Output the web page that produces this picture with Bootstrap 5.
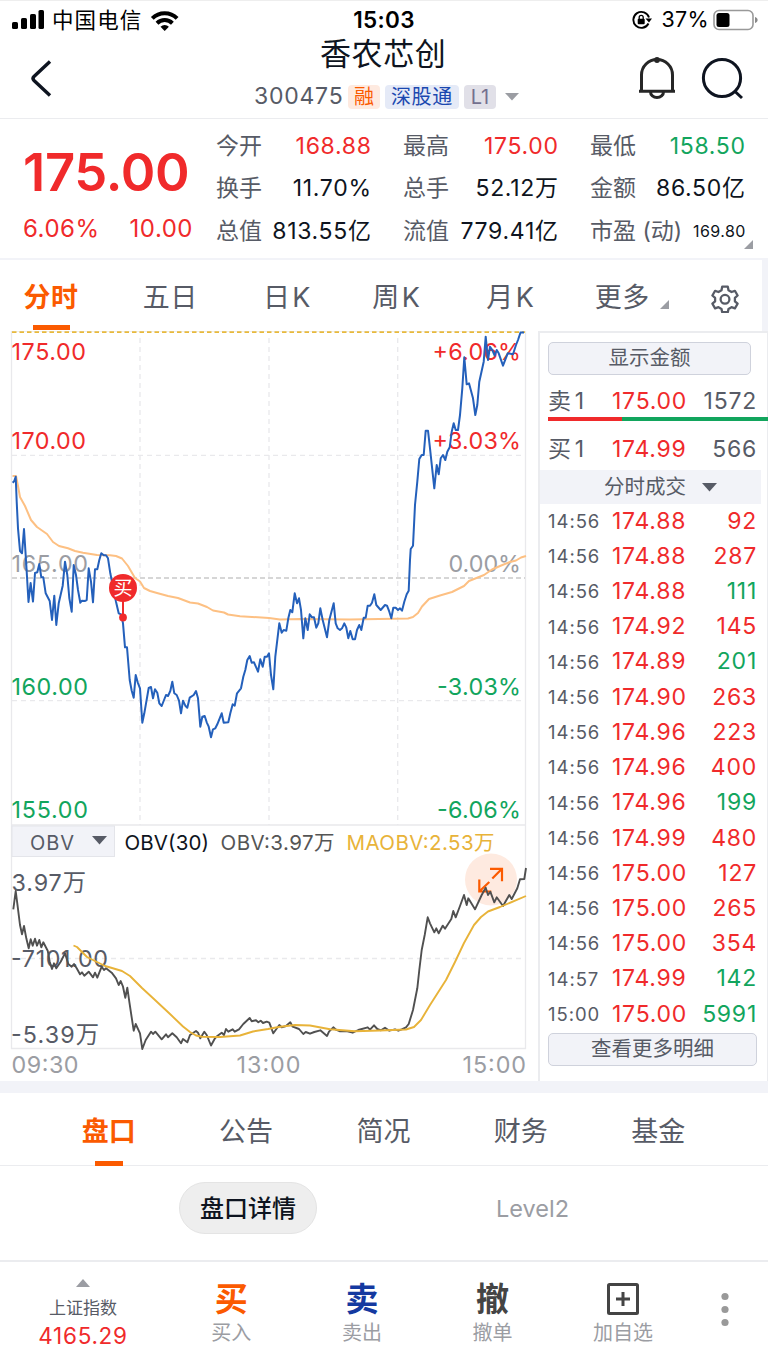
<!DOCTYPE html>
<html lang="zh-CN">
<head>
<meta charset="utf-8">
<meta name="viewport" content="width=device-width, initial-scale=1">
<title>香农芯创 300475</title>
<link href="https://cdn.jsdelivr.net/npm/bootstrap@5.3.0/dist/css/bootstrap.min.css" rel="stylesheet">
<style>
:root{--up:#f02a2b;--down:#12a55d;--ink:#0e1420;--sub:#575b66;--mute:#9b9da3;--brand:#fb5a00;--panel:#f2f3f8;--line:#ebecef}
body{width:768px;height:1366px;margin:0;overflow:hidden;background:#fff;color:var(--ink);font-family:Inter,"Noto Sans CJK SC",sans-serif;font-size:23px;line-height:1;white-space:nowrap}
svg{display:block;flex:none}
.up{color:var(--up)}.down{color:var(--down)}.sub{color:var(--sub)}.mute{color:var(--mute)}
.statusbar{height:40px;border-top:1px solid #eee;color:#000;font-size:21.5px}
.titlebar{height:79px;border-bottom:1px solid var(--line)}
.tag{height:24px;line-height:24px;font-size:20px;border-radius:4px;padding:0 6px}
.quote{height:141px;border-bottom:2px solid var(--panel)}
.metrics{width:155px;padding-top:6px;margin-right:32px}
.metric{height:42.5px}
.metric span+span{letter-spacing:.7px;margin-right:-.7px}
.bigprice{font-size:52.5px;font-weight:600;letter-spacing:-.3px}
.periods{height:71px;width:762px;font-size:27px;letter-spacing:.6px}
.periods .kline{letter-spacing:2.4px}
.periods,.sections{color:var(--sub)}
.on{color:var(--brand);font-weight:600;position:relative}
.on::after{content:"";position:absolute;left:50%;margin-left:-18.5px;width:37px;height:5px;background:var(--brand);top:calc(100% + 14px)}
.strip{width:6px;background:var(--panel)}
.board{height:750px}
.chart{width:538px}
.book{width:230px;border:solid var(--line);border-width:2px 1px 0 2px}
.greybtn{height:33px;border:1.5px solid #cfd2dc;border-radius:5px;background:var(--panel);color:var(--sub);font-size:20.5px}
.level,.tick{letter-spacing:.75px}
.c1{width:64px}.c2{width:74px}
.tick{height:35.22px}
.tick .c1{font-size:18.5px;letter-spacing:.95px}
.split{height:4px;margin-right:-1px}
.tickhead{height:34px;width:221px;background:var(--panel);color:var(--sub);font-size:20.5px}
.sections{height:73px;border-bottom:1px solid var(--line);font-size:27px}
.sections>div{width:137.4px}
.sections .on::after{width:28px;margin-left:-14px;top:calc(100% + 16px)}
.pillrow{height:96px;border-bottom:2px solid var(--line)}
.pill{width:138px;height:52px;padding-top:2px;border:1px solid #e4e4e4;border-radius:26px;background:#eee;font-size:24px;font-weight:500}
.dock{height:103px}
.dock>div{width:130.6px}
.dock .glyph{font-size:33px;font-weight:700;line-height:36px}
.dock .cap{font-size:20px;line-height:24px;color:var(--mute)}
svg text{font-family:Inter,"Noto Sans CJK SC",sans-serif;font-size:23.3px}
</style>
</head>
<body>
<header>
  <div class="statusbar d-flex align-items-center position-relative">
    <svg class="ms-1" width="40" height="38" viewBox="4 1 40 38"><g><rect x="12" y="21" width="6" height="7" rx="1.6"/><rect x="21" y="17" width="6" height="11" rx="1.6"/><rect x="30" y="13" width="6" height="15" rx="1.6"/><rect x="38.500" y="9" width="5.500" height="19" rx="1.6"/></g></svg>
    <span class="ms-2" style="letter-spacing:1.1px">中国电信</span>
    <svg class="ms-2" width="30" height="22" viewBox="0 0 30 22"><g fill="none" stroke="#000" stroke-width="4"><path d="M2.300 8.300a17.500 17.500 0 0 1 24.800 0"/><path d="M7 13.200a11 11 0 0 1 15.400 0"/></g><path d="M14.700 21l-4.200-4.300a6.200 6.200 0 0 1 8.400 0z"/></svg>
    <b class="position-absolute start-50 translate-middle-x fw-semibold" style="font-size:22.5px;letter-spacing:.3px">15:03</b>
    <div class="ms-auto d-flex align-items-center" style="margin-right:9px;margin-top:-1px">
      <svg width="20" height="20" viewBox="0 0 20 20"><path d="M16.500 13.500A8 8 0 1 1 17 7.500" fill="none" stroke="#000" stroke-width="1.900"/><path d="M13.500 8.500h6.500l-3 4z"/><rect x="5.700" y="8.700" width="7" height="5.600" rx="1"/><path d="M7.200 9V7.300a2 2 0 0 1 4 0V9" fill="none" stroke="#000" stroke-width="1.300"/></svg>
      <span style="margin:0 4px 0 10px;letter-spacing:.3px">37%</span>
      <svg width="46" height="22" viewBox="0 0 46 22"><rect x="1" y="1.500" width="39" height="19" rx="5" fill="#fff" stroke="#999" stroke-width="1.600"/><rect x="3.500" y="4" width="13" height="14" rx="2.500"/><path d="M42 8c3.500.8 3.500 5.200 0 6z" fill="#888"/></svg>
    </div>
  </div>
  <div class="titlebar d-flex">
    <svg width="60" height="76" viewBox="0 40 60 76"><path d="M50 61.500L34 76.500q-2 2 0 4L50 95.500" fill="none" stroke="#0e1420" stroke-width="3.400"/></svg>
    <div style="margin-left:194px">
      <div style="font-size:31px;height:43px;line-height:27px;letter-spacing:.6px;margin-left:66px">香农芯创</div>
      <div class="d-flex align-items-center" style="gap:5px;height:27px">
        <span class="sub" style="letter-spacing:.75px;width:89px">300475</span>
        <span class="tag" style="background:#feeae0;color:#fb5a00">融</span>
        <span class="tag" style="background:#e5eaf7;color:#1b48b0;width:74px;letter-spacing:.6px">深股通</span>
        <span class="tag text-center" style="background:#e1e0e8;color:#74708f;width:32px;padding:0">L1</span>
        <svg width="14" height="8" viewBox="0 0 14 8" style="margin-left:4px"><path d="M0 0h14L7 7.500z" fill="#9b9da3"/></svg>
      </div>
    </div>
    <svg class="ms-auto" width="130" height="76" viewBox="638 40 130 76"><g fill="none" stroke="#262626" stroke-width="3"><path d="M641.500 91V75a15.500 15.500 0 0 1 31 0v16M639 91.200h36M650.500 92a6.500 5.600 0 0 0 13 0"/></g><circle cx="657" cy="60" r="2.900" fill="#262626"/><g fill="none" stroke="#0e1420" stroke-width="3"><circle cx="722" cy="78" r="18.600"/><path d="M734.500 91l7.500 7"/></g></svg>
  </div>
</header>

<section class="quote d-flex position-relative">
  <div class="up" style="padding:27px 0 0 23px;width:216px">
    <div class="bigprice">175.00</div>
    <div class="d-flex justify-content-between" style="padding:18px 23px 0 0;font-size:24px;letter-spacing:.5px"><span>6.06%</span><span>10.00</span></div>
  </div>
  <div class="metrics">
    <div class="metric d-flex justify-content-between align-items-center"><span class="sub">今开</span><span class="up">168.88</span></div>
    <div class="metric d-flex justify-content-between align-items-center"><span class="sub">换手</span><span>11.70%</span></div>
    <div class="metric d-flex justify-content-between align-items-center"><span class="sub">总值</span><span>813.55亿</span></div>
  </div>
  <div class="metrics">
    <div class="metric d-flex justify-content-between align-items-center"><span class="sub">最高</span><span class="up">175.00</span></div>
    <div class="metric d-flex justify-content-between align-items-center"><span class="sub">总手</span><span>52.12万</span></div>
    <div class="metric d-flex justify-content-between align-items-center"><span class="sub">流值</span><span>779.41亿</span></div>
  </div>
  <div class="metrics me-0">
    <div class="metric d-flex justify-content-between align-items-center"><span class="sub">最低</span><span class="down">158.50</span></div>
    <div class="metric d-flex justify-content-between align-items-center"><span class="sub">金额</span><span>86.50亿</span></div>
    <div class="metric d-flex justify-content-between align-items-center"><span class="sub">市盈 (动)</span><span style="font-size:16px;letter-spacing:.4px">169.80</span></div>
  </div>
  <svg class="position-absolute" style="right:15px;bottom:9px" width="9" height="9"><path d="M9 0v9H0z" fill="#9b9da3"/></svg>
</section>

<div class="d-flex">
  <nav class="periods d-flex align-items-center" style="padding:3px 0 0 23.500px">
    <span class="on" style="margin-right:64px">分时</span><span style="margin-right:65px">五日</span><span class="kline" style="margin-right:59.500px">日K</span><span class="kline" style="margin-right:64px">周K</span><span class="kline" style="margin-right:58.500px">月K</span><span>更多</span>
    <svg width="9" height="9" style="margin:14px 42px 0 10px"><path d="M9 0v9H0z" fill="#9b9da3"/></svg>
    <svg width="28" height="28" viewBox="0 0 28 28" style="margin-top:3px"><g fill="none" stroke="#575b66" stroke-width="2.300" stroke-linejoin="round"><path d="M11.200 1.700h5.600l.7 3.600 3 1.700 3.400-1.200 2.700 4.700-2.700 2.400v3.400l2.700 2.400-2.700 4.700-3.400-1.200-3 1.700-.7 3.300h-5.600l-.7-3.300-3-1.700-3.400 1.200-2.700-4.700 2.700-2.400v-3.400l-2.700-2.400 2.700-4.700L7.500 7l3-1.700z"/><circle cx="14" cy="14.300" r="4.400"/></g></svg>
  </nav>
  <div class="strip"></div>
</div>

<main class="board d-flex">
  <div class="chart">
    <svg width="538" height="750" viewBox="0 331 538 750">
      <g fill="none" stroke="#e9e9ec" stroke-width="1.300">
        <path d="M11.500 331H525.500V1048.500H11.500zM11.500 825H525.500"/>
        <g stroke-dasharray="5 4"><path d="M140 338V825M269 338V825M397.700 338V825M12 455.300H525M12 700.700H525M12 958.500H525"/></g>
        <path d="M12 578H525" stroke="#c9c9c9" stroke-dasharray="5 3"/>
      </g>
      <path d="M12 332.200H525" stroke="#e8b93c" stroke-width="1.800" stroke-dasharray="4.500 3"/>
      <rect x="12" y="826" width="102.500" height="30.500" fill="#f2f3f8" stroke="#e4e5ea"/>
      <g fill="#f02a2b"><text x="11.500" y="359.500" textLength="74.500">175.00</text><text x="11.500" y="448.500" textLength="74.500">170.00</text><text x="432.500" y="359.500" textLength="88.500">+6.06%</text><text x="432.500" y="448.500" textLength="88.500">+3.03%</text></g>
      <g fill="#9b9da3"><text x="11.500" y="571.500" textLength="76.500">165.00</text><text x="448.500" y="571.500" textLength="72.500">0.00%</text><text x="11.500" y="1073" textLength="67">09:30</text><text x="236.500" y="1073" textLength="64">13:00</text><text x="462.500" y="1073" textLength="63.500">15:00</text></g>
      <g fill="#12a55d"><text x="11.500" y="694.500" textLength="76.500">160.00</text><text x="11.500" y="817.500" textLength="76.500">155.00</text><text x="437" y="694.500" textLength="84">-3.03%</text><text x="437" y="817.500" textLength="84">-6.06%</text></g>
      <g fill="#575b66"><text x="11.500" y="891" textLength="74.500">3.97万</text><text x="11" y="967" textLength="97">-7101.00</text><text x="11" y="1043" textLength="88">-5.39万</text></g>
      <text x="30" y="850" textLength="44" fill="#575b66" style="font-size:20px">OBV</text>
      <path d="M92 836h15l-7.500 8.500z" fill="#575b66"/>
      <g><text x="124.500" y="850" textLength="84.500" fill="#0e1420" style="font-size:20.500px">OBV(30)</text><text x="220.500" y="850" textLength="114" fill="#555" style="font-size:20.500px">OBV:3.97万</text><text x="346.500" y="850" textLength="148" fill="#e8b339" style="font-size:20.500px">MAOBV:2.53万</text></g>
      <g fill="none" stroke-linejoin="round">
        <polyline stroke="#fdc083" stroke-width="2" points="12.500,476 16,476 18,486 20,497 25,506 31,520 37,527 47,534 53,542 59,546 68,548.300 75,551 83,552.700 97,555 110,555.300 116,556 122,558.500 128,566 135,578 140,581.500 144,588 150,591 157,593 168,596 178,598 190,602.500 198,603.500 207,607 213,610.500 224,612.500 228,614.500 240,616.300 269,618 280,619.500 300,619 350,619.500 408,618.500 413,617 418,613 422,606.500 429,599 440,595.500 452,592 464,586 469,581 484,575 492,569.500 500,566 510,562 516,560.500 521,557.500 526,556"/>
        <polyline stroke="#2460bb" stroke-width="2" points="12.700,482.700 14.300,481 15.700,476.700 16.700,501.700 18,528.300 20,551 22,553.300 24,529 26.300,565 28.500,602 30.600,583 33,601.500 35,573 37.300,572.300 39.300,564 41.300,577.300 43.300,577.300 45.700,593.300 49.700,601 52,620 54.300,595.700 56.300,625 58.700,603.300 62.700,585.700 65,561.700 67.300,575 69.300,598 71.700,611.700 73.700,565 76,575 78,590 80.300,602.700 82,600.700 84.700,601 86.700,600 88.700,568.300 91,581.700 93,602.300 95,569.300 97.300,569.300 99.300,560 101.300,553.300 103.700,555.300 106,555.300 108,558.300 110.300,573.300 116,601.700 118.700,613.300 121,614.300 123,623.300 125,647.300 127,647.300 129.700,680 131.700,690.700 133.700,697.700 135.700,675 137.700,682.300 140,688.300 142.300,722.700 144.300,713.300 148.700,688 151,687 153,698.300 155,689.300 157.300,692.700 159.300,703.300 161.700,706 166,695 168,696 170.300,691 172.300,681.700 174.300,693.300 176.700,695 179,700.700 181,713.300 183,700.700 185.300,705.700 187.300,707.700 189.700,697.700 193.700,695 196,691 198,698.300 200.300,726.700 202.300,716.700 204.700,716 206.700,722.300 208.700,726.700 211,737.300 213,729.300 215.300,728.300 217.300,724.300 221.700,713.300 223.700,722.700 228.300,722.300 230.300,713.300 232.700,704.300 234.700,705.700 237,693.300 241,688.300 243.300,676.700 245.300,670 247.300,660 249.700,656 251.700,662.700 254,662.300 258,671.700 260.300,659.300 262.700,666.700 264.700,656.700 267,656.700 269,653.300 271,675 273.300,689.300 275.300,656.700 279.300,623.300 281.700,632.700 283.700,630 286.300,630.700 288.300,618.300 290.300,610 292.300,612.300 294.700,593.300 297,603.300 299,598.300 301,610 303.300,638.300 305.300,618.300 307.700,630 309.700,614.300 312,617.300 314,617.300 316.300,627.700 318.300,623.300 320.300,608.300 322.700,620 327,637.300 329.300,620 333.700,603.300 335.700,623.300 337.700,628.300 340,630 342,628.300 344.300,623.300 346.300,627.700 348.300,638.300 350.300,631 352.700,639.300 355,639.300 357,630 359.300,625 361.300,630 363.700,617.700 365.700,617.700 367.700,605.700 370,605.700 372,602.700 374.300,594.300 376.300,605 380.700,610 385,605 387,605.700 389.300,611.700 391.300,618.300 393.300,607.700 395.700,607.700 398,610 400,608.300 402,610.700 404.300,601.700 406.700,594.300 408.700,590.700 410,560 410.700,549 413,545.700 415,505 417.300,481.700 419.300,459 421.700,455 423.700,455 425.700,430.700 428,430.700 430,448.300 434.300,488.300 436.700,465 438.700,474.300 440.700,458.300 443,455 445.300,460 447.300,451.700 449.700,447.300 451.700,431.700 453.700,423.300 455.700,430 458,430 460,415 462.300,388.300 464.300,357.300 466.700,384.300 469,383.300 473,398.300 475.300,415 477.300,405 479.300,381.700 483.700,361.700 485.700,336.700 488,360 490,346.700 492.300,350 494.700,355.700 496.700,350 498.700,353.300 503,365.700 507.700,353.300 513,354.300 516,345 518,340 520.500,332.500 524,332.500"/>
      </g>
      <circle cx="491" cy="879.500" r="26" fill="#feeae0"/>
      <path d="M490 868.800h12v12.500M502 868.800l-9.700 9.700M479.300 879.500v12h12M479.300 891.500l10-9.500" fill="none" stroke="#fb5a00" stroke-width="2.200"/>
      <g fill="none" stroke-linejoin="round" stroke-width="1.900">
        <polyline stroke="#505050" points="13.300,909.300 15.700,891 17.700,906.700 20,925 22,934.300 24,926 26.300,938.300 28.700,948.300 30.700,939.300 32.700,945.700 35,938.700 37,945.700 39.300,940 41.300,947.300 43.300,942.300 47.700,950.700 49.700,961.700 52,969 54,963.300 56.300,968.300 60.700,961.700 65,953.300 68.300,964 71.700,966.700 74,964 76.700,968.300 80,974.300 82,972.300 84.300,975.700 88.700,971.700 93,977.300 95,972.700 97.300,977.700 101.700,966.700 104,970 106,968.300 111.700,972.700 116,978.300 118.700,985 120.700,981 123,986.700 125.300,997.700 127.300,987.700 129.300,1001.700 133.700,1030.700 135.700,1024 140,1033.300 142.300,1049 145.700,1040 151,1031.700 153,1034 155.300,1031.700 161.700,1039.300 166,1034.300 168,1037.300 172.300,1033.300 176.700,1037.300 181,1043.300 183,1039 187.300,1042.300 190,1035 196,1031 198,1032.700 200.300,1038.300 204.300,1031.700 206.700,1035 211,1045.500 215,1038.300 217.300,1036 221.700,1032.700 224,1035 226,1029 228.300,1031.700 232.700,1029.300 234.700,1031.700 239,1029.300 243.300,1024 249.700,1018 251.700,1021.300 256,1020.300 258.300,1022.300 260.700,1020.700 263,1023 266.700,1021.700 269.300,1022.700 273.300,1033.300 279.300,1025 281.700,1027.300 286,1026 290.300,1022.300 292.700,1026.700 299,1029 303.300,1034 305.700,1032 310,1033.700 314.300,1032 320.300,1030.300 327,1036 329,1031.700 333.300,1027.300 336,1029.700 340,1031.300 346.300,1031 352.700,1032.700 358.300,1030 367.700,1027.300 370,1029.700 374,1025.300 377.300,1029 381,1030.300 385,1027.700 389.300,1030.700 395,1029.300 398.300,1030.700 401.700,1029.300 406,1027.300 408.700,1024 413,1010 417.300,988.300 419.300,970 421.700,950 424.700,935 427.700,917.300 430,923.300 434.300,932.300 436.300,928.300 438.700,933.300 442.700,925.700 445,928.700 451.300,919 453.300,911 455.700,917.300 460,906 464,895 466.700,905 468.300,898.300 475,909.300 481.700,895 485.700,887.700 488,895 490.300,891.700 494.300,902.300 496.700,897.300 503,906 509.300,895 511.700,899 517.300,888.300 520,879.300 524.300,879 526,868"/>
        <polyline stroke="#e8b339" points="73.500,945.500 77,947 87,957 105,966 112,968 122,971 130,976 142,988 155,1000 170,1014 183,1026.500 190,1032 196,1035.500 202,1036.700 220,1037 240,1035.500 253,1031.500 268,1029 280,1026.700 295,1025 310,1025.500 330,1029.300 355,1031.300 380,1030.500 406,1029.500 414,1027 421,1020 430,1005 446,980 455,962 464,943 474,925 481,917 488,911.500 500,907 526,896"/>
      </g>
      <path d="M123 600v17" stroke="#f02a2b" stroke-width="2"/><circle cx="123" cy="617.500" r="3.900" fill="#f02a2b"/><circle cx="123" cy="588" r="14" fill="#f02a2b"/><text x="123" y="595" text-anchor="middle" fill="#fff" style="font-size:19px">买</text>
    </svg>
  </div>
  <aside class="book">
    <div style="padding:9px 0 0 8px">
      <div class="greybtn d-flex align-items-center justify-content-center" style="width:203px">显示金额</div>
      <div class="level d-flex align-items-center sub" style="height:42px;padding:11px 10px 0 0"><span class="c1">卖<span style="margin-left:3px">1</span></span><span class="c2 up">175.00</span><span class="ms-auto">1572</span></div>
      <div class="split d-flex"><div style="width:33.5%;background:#f02a2b"></div><div class="flex-grow-1" style="background:#12a55d"></div></div>
      <div class="level d-flex align-items-center sub" style="height:49px;padding:7px 10px 0 0"><span class="c1">买<span style="margin-left:3px">1</span></span><span class="c2 up">174.99</span><span class="ms-auto">566</span></div>
    </div>
    <div class="tickhead d-flex align-items-center" style="padding-left:64px">分时成交<svg class="ms-3" width="15" height="9"><path d="M0 0h15L7.500 8.500z" fill="#575b66"/></svg></div>
    <div id="ticks" style="padding:0 10px 0 8px;margin-top:-.500px"></div>
    <div class="greybtn d-flex align-items-center justify-content-center" style="margin:1px 10px 0 8px">查看更多明细</div>
  </aside>
</main>
<div style="height:12px;background:#f2f3f8"></div>

<nav class="sections d-flex text-center" style="padding:4px 0 0 40px">
  <div class="d-flex justify-content-center align-items-center"><span class="on">盘口</span></div>
  <div class="d-flex justify-content-center align-items-center">公告</div>
  <div class="d-flex justify-content-center align-items-center">简况</div>
  <div class="d-flex justify-content-center align-items-center">财务</div>
  <div class="d-flex justify-content-center align-items-center">基金</div>
</nav>
<div class="pillrow d-flex align-items-start" style="padding:16px 0 0 179px">
  <div class="pill d-flex align-items-center justify-content-center">盘口详情</div>
  <div class="mute d-flex align-items-center" style="height:53px;margin-left:179px;font-size:23.500px">Level2</div>
</div>
<footer class="dock d-flex text-center">
  <div style="width:166px;padding-top:17px">
    <svg class="mx-auto" width="14" height="8"><path d="M0 8h14L7 0z" fill="#9b9da3"/></svg>
    <div class="sub" style="font-size:17px;line-height:20px;margin-top:11px">上证指数</div>
    <div class="up" style="line-height:24px;margin-top:6px;font-size:22.500px;letter-spacing:.7px">4165.29</div>
  </div>
  <div style="padding-top:19px"><div class="glyph" style="color:#fb5a00">买</div><div class="cap" style="margin-top:4px">买入</div></div>
  <div style="padding-top:19px"><div class="glyph" style="color:#1439a0">卖</div><div class="cap" style="margin-top:4px">卖出</div></div>
  <div style="padding-top:19px"><div class="glyph" style="color:#444">撤</div><div class="cap" style="margin-top:4px">撤单</div></div>
  <div style="padding-top:19px"><svg class="mx-auto" width="34" height="36" viewBox="0 0 34 36"><g fill="none" stroke="#444" stroke-width="3"><rect x="2.500" y="3.500" width="29" height="29" rx="1"/><path d="M17 11v14M10 18h14"/></g></svg><div class="cap" style="margin-top:4px">加自选</div></div>
  <svg width="72" height="103"><g fill="#999"><circle cx="37" cy="34.500" r="3.600"/><circle cx="37" cy="47.500" r="3.600"/><circle cx="37" cy="60.500" r="3.600"/></g></svg>
</footer>
<script>
const trades = [
  ["14:56","174.88","92","up"],["14:56","174.88","287","up"],["14:56","174.88","111","down"],
  ["14:56","174.92","145","up"],["14:56","174.89","201","down"],["14:56","174.90","263","up"],
  ["14:56","174.96","223","up"],["14:56","174.96","400","up"],["14:56","174.96","199","down"],
  ["14:56","174.99","480","up"],["14:56","175.00","127","up"],["14:56","175.00","265","up"],
  ["14:56","175.00","354","up"],["14:57","174.99","142","down"],["15:00","175.00","5991","down"]];
document.getElementById("ticks").innerHTML = trades.map(([t,p,v,d]) =>
  `<div class="tick d-flex align-items-center"><span class="c1 sub">${t}</span><span class="c2 up">${p}</span><span class="ms-auto ${d}">${v}</span></div>`).join("");
</script>
<script src="https://cdn.jsdelivr.net/npm/bootstrap@5.3.0/dist/js/bootstrap.bundle.min.js"></script>
</body>
</html>
